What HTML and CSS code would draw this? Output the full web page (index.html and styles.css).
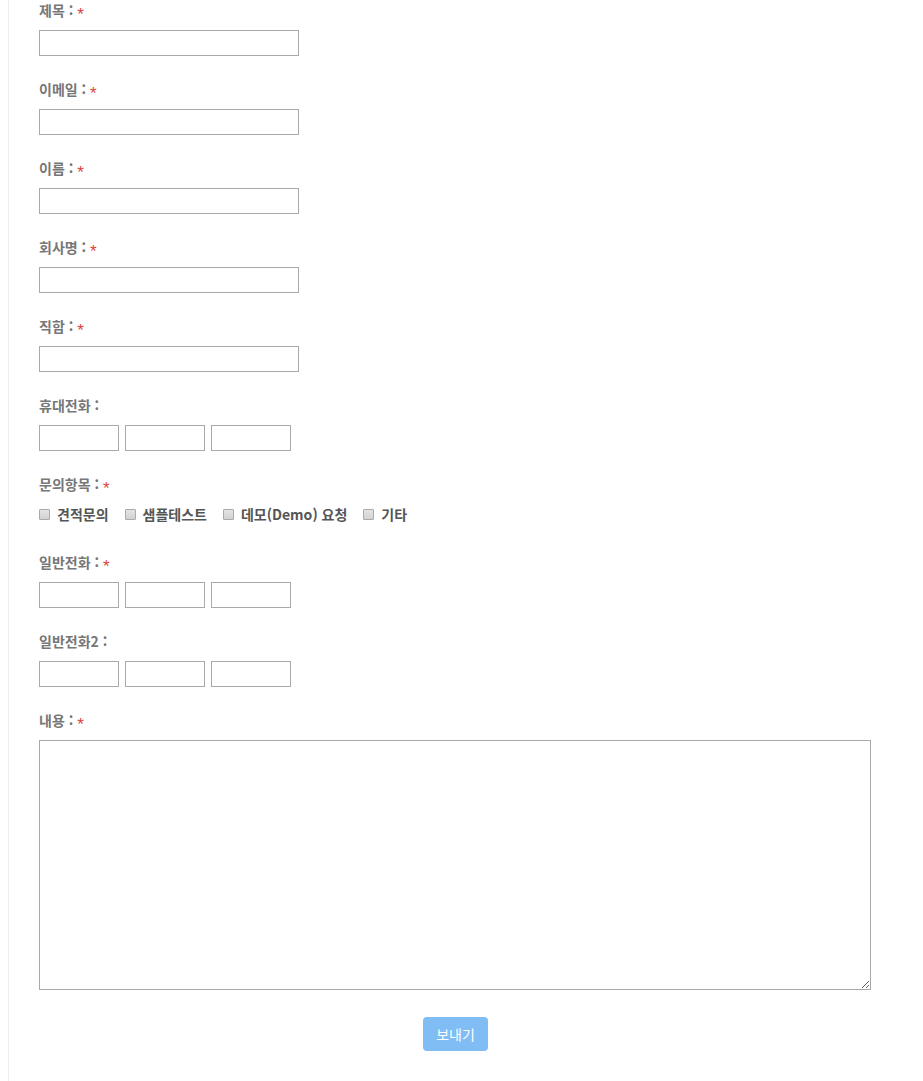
FILE: index.html
```html
<!DOCTYPE html>
<html lang="ko">
<head>
    <meta charset="UTF-8">
    <meta name="viewport" content="width=device-width, initial-scale=1.0">
    <title>문의하기</title>
    <link rel="stylesheet" href="styles.css">
</head>
<body>
    <div class="container">
        <form class="contact-form">
            <div class="form-group">
                <label>제목 : <span class="req">*</span></label>
                <input type="text" class="wide">
            </div>
            <div class="form-group">
                <label>이메일 : <span class="req">*</span></label>
                <input type="text" class="wide">
            </div>
            <div class="form-group">
                <label>이름 : <span class="req">*</span></label>
                <input type="text" class="wide">
            </div>
            <div class="form-group">
                <label>회사명 : <span class="req">*</span></label>
                <input type="text" class="wide">
            </div>
            <div class="form-group">
                <label>직함 : <span class="req">*</span></label>
                <input type="text" class="wide">
            </div>
            <div class="form-group">
                <label>휴대전화 :</label>
                <div class="phone">
                    <input type="text">
                    <input type="text">
                    <input type="text">
                </div>
            </div>
            <div class="form-group checks-group">
                <label>문의항목 : <span class="req">*</span></label>
                <div class="checks">
                    <span class="check"><input type="checkbox">견적문의</span>
                    <span class="check"><input type="checkbox">샘플테스트</span>
                    <span class="check"><input type="checkbox">데모(Demo) 요청</span>
                    <span class="check"><input type="checkbox">기타</span>
                </div>
            </div>
            <div class="form-group">
                <label>일반전화 : <span class="req">*</span></label>
                <div class="phone">
                    <input type="text">
                    <input type="text">
                    <input type="text">
                </div>
            </div>
            <div class="form-group">
                <label>일반전화2 :</label>
                <div class="phone">
                    <input type="text">
                    <input type="text">
                    <input type="text">
                </div>
            </div>
            <div class="form-group">
                <label>내용 : <span class="req">*</span></label>
                <textarea></textarea>
            </div>
            <div class="submit-row">
                <button type="button">보내기</button>
            </div>
        </form>
    </div>
</body>
</html>
```

FILE: styles.css
```css
body {
    margin: 0 8px;
    padding: 0;
    font-family: "Noto Sans CJK KR", "Noto Sans", sans-serif;
    background: #fff;
}

.container {
    border-left: 1px solid #eeeeee;
    padding: 0 43px 30px 30px;
    min-height: 1081px;
    box-sizing: border-box;
}

.form-group {
    margin-bottom: 23px;
}

.form-group label {
    display: block;
    height: 20px;
    line-height: 20px;
    margin-bottom: 10px;
    font-size: 14px;
    font-weight: bold;
    color: #777;
}

.req {
    position: relative;
    top: 4px;
    color: #e0413f;
    font-family: "Liberation Sans", sans-serif;
    font-size: 17px;
    font-weight: normal;
    line-height: 0;
}

.form-group input[type="text"] {
    display: block;
    height: 26px;
    margin: 0;
    padding: 2px 4px;
    border: 1px solid #a9a9a9;
    box-sizing: border-box;
    font-size: 13px;
}

.form-group input.wide {
    width: 260px;
}

.phone {
    display: flex;
    gap: 6px;
}

.phone input[type="text"] {
    width: 80px;
}

.checks-group {
    margin-bottom: 28px;
}

.checks {
    display: flex;
    gap: 16px;
    height: 20px;
    align-items: center;
}

.check {
    display: flex;
    align-items: center;
    font-size: 14px;
    font-weight: bold;
    color: #555;
}

.check input {
    appearance: none;
    -webkit-appearance: none;
    width: 11px;
    height: 11px;
    margin: 0 7px 0 0;
    border: 1px solid #aaa;
    border-radius: 1px;
    background: linear-gradient(#e4e4e4, #d2d2d2);
    box-sizing: border-box;
}

textarea {
    display: block;
    width: 832px;
    height: 250px;
    margin: 0;
    border: 1px solid #a9a9a9;
    box-sizing: border-box;
}

.submit-row {
    display: flex;
    justify-content: center;
    padding-top: 4px;
}

.submit-row button {
    width: 65px;
    height: 34px;
    border: none;
    border-radius: 4px;
    background: #80bdf5;
    color: #fff;
    font-family: inherit;
    font-size: 14px;
}
```
